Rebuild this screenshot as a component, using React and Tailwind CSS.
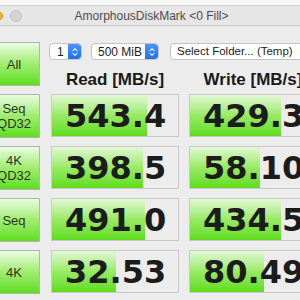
import { ChevronsUpDown } from "lucide-react";

const rows = [
  { label: ["Seq", "QD32"], read: "543.4", readPct: 75, write: "429.3", writePct: 72.5 },
  { label: ["4K", "QD32"], read: "398.5", readPct: 72, write: "58.10", writePct: 55.5 },
  { label: ["Seq"], read: "491.0", readPct: 73.5, write: "434.5", writePct: 72.5 },
  { label: ["4K"], read: "32.53", readPct: 50.5, write: "80.49", writePct: 58.5 },
];

const GreenButton = ({ children }) => (
  <div className="w-[52px] h-[44px] border border-[#b4b4b4] bg-linear-to-b from-[#eafbe0] via-[#9fec6c] to-[#5cde12] flex flex-col items-center justify-center text-[13px] leading-[15px] text-[#2c3424]">
    {children}
  </div>
);

const ValueCell = ({ value, pct }) => (
  <div className="relative h-[43px] border border-[#c9c9c9] bg-[#ececec] overflow-hidden flex items-center">
    <div
      className="absolute left-0 top-0 bottom-0 bg-linear-to-b from-[#e2f7d4] via-[#98ea62] to-[#5edc16]"
      style={{ width: `${pct}%` }}
    />
    <span className="relative pl-[13px] whitespace-nowrap font-['DejaVu_Sans'] font-bold text-[32px] leading-none text-[#1c1c1c]">
      {value}
    </span>
  </div>
);

const Stepper = () => (
  <div className="w-[13px] h-full bg-linear-to-b from-[#4d96f8] to-[#1f6ff0] rounded-r-[3px] flex items-center justify-center">
    <ChevronsUpDown size={10} strokeWidth={2.5} color="#ffffff" />
  </div>
);

export default function App() {
  return (
    <div className="w-[300px] h-[300px] overflow-hidden bg-[#ececec] font-['Liberation_Sans',sans-serif]">
      <div className="h-[5px] bg-[#f7f7f7]" />
      <div className="relative h-[21px] bg-[#e6e6e6] border-t border-[#d2d2d2] border-b border-b-[#c6c6c6] flex items-center justify-center">
        <div className="absolute left-[-7px] top-[5px] w-[10px] h-[10px] rounded-full bg-[#f5b128] border border-[#dc9a1e]" />
        <div className="absolute left-[10px] top-[4px] w-[12px] h-[12px] rounded-full bg-[#d4d4d4] border border-[#c0c0c0]" />
        <span className="text-[12px] text-[#4d4d4d] ml-[3px]">AmorphousDiskMark &lt;0 Fill&gt;</span>
      </div>

      <div className="ml-[-12px] pt-[16px] grid grid-cols-[53px_128px_128px] gap-x-[10px] gap-y-[8px] auto-rows-[44px]">
        <GreenButton>All</GreenButton>
        <div className="col-span-2 flex flex-col">
          <div className="ml-[-2px] mt-[1px] flex items-center h-[17px]">
            <div className="w-[33px] h-[17px] rounded-[4px] border border-[#c4c4c4] bg-white flex items-center justify-between overflow-hidden">
              <span className="pl-[7px] text-[12px] text-[#222]">1</span>
              <Stepper />
            </div>
            <div className="ml-[9px] w-[68px] h-[17px] rounded-[4px] border border-[#c4c4c4] bg-white flex items-center justify-between overflow-hidden">
              <span className="pl-[6px] text-[12px] text-[#222]">500 MiB</span>
              <Stepper />
            </div>
            <div className="ml-[11px] w-[140px] shrink-0 h-[17px] rounded-[4px] border border-[#c4c4c4] bg-white flex items-center">
              <span className="pl-[6px] text-[11.5px] text-[#222] whitespace-nowrap">Select Folder... (Temp)</span>
            </div>
          </div>
          <div className="mt-[10px] grid grid-cols-[128px_128px] gap-x-[10px]">
            <div className="text-center font-bold text-[17px] leading-[19px] text-[#1a1a1a] whitespace-nowrap">Read [MB/s]</div>
            <div className="text-center font-bold text-[17px] leading-[19px] text-[#1a1a1a] whitespace-nowrap">Write [MB/s]</div>
          </div>
        </div>

        {rows.map((r, i) => (
          <div key={i} className="contents">
            <GreenButton>
              {r.label.map((l) => (
                <span key={l}>{l}</span>
              ))}
            </GreenButton>
            <ValueCell value={r.read} pct={r.readPct} />
            <ValueCell value={r.write} pct={r.writePct} />
          </div>
        ))}
      </div>
    </div>
  );
}
